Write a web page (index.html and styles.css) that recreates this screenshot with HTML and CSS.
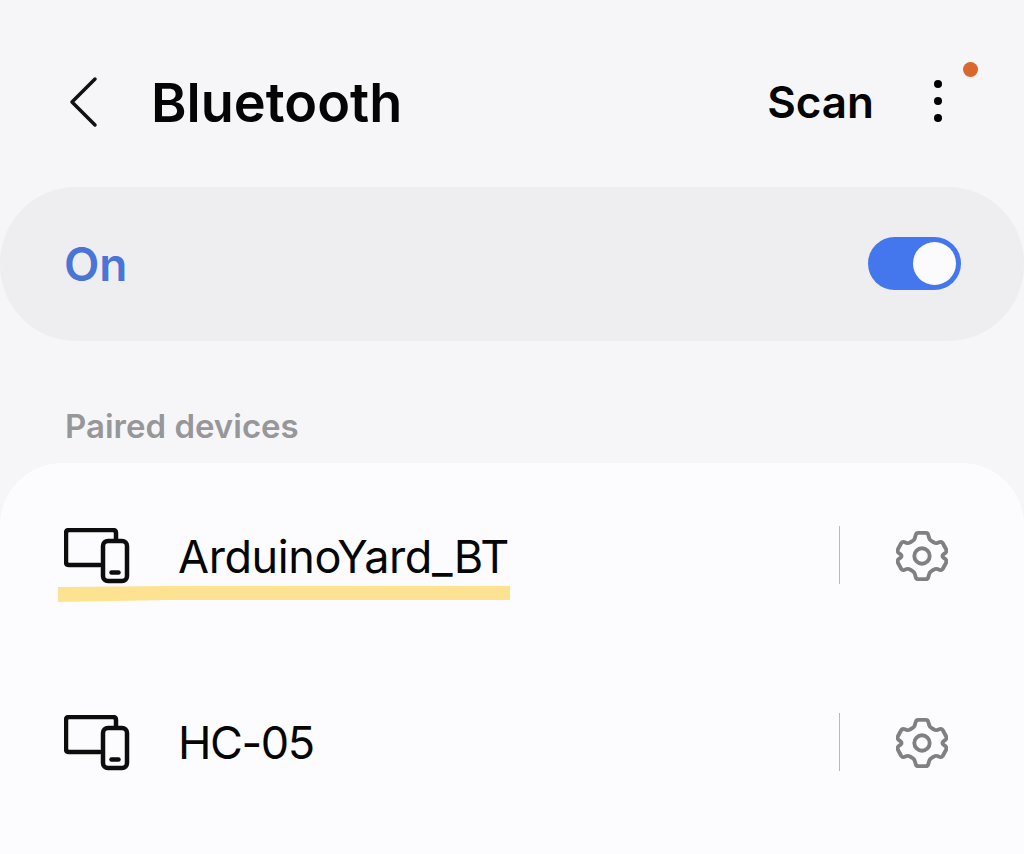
FILE: index.html
```html
<!DOCTYPE html>
<html lang="en">
<head>
<meta charset="UTF-8">
<title>Bluetooth</title>
<link rel="stylesheet" href="styles.css">
</head>
<body>
<div class="screen">
    <header class="topbar">
        <svg class="back" width="32" height="52" viewBox="0 0 32 52">
            <path d="M27 3 L4 26 L27 49"/>
        </svg>
        <h1>Bluetooth</h1>
        <span class="scan">Scan</span>
        <div class="more">
            <i></i><i></i><i></i>
            <b class="dot"></b>
        </div>
    </header>

    <section class="toggle-card">
        <span class="on">On</span>
        <div class="switch"><i></i></div>
    </section>

    <h2>Paired devices</h2>

    <section class="list">
        <div class="device first">
            <svg class="devicon" width="66" height="56" viewBox="0 0 66 56">
                <path class="line" d="M36 37 H5 Q2 37 2 34 V5 Q2 2 5 2 H49 Q52 2 52 5 V12"/>
                <rect class="line" x="39" y="13" width="24" height="40" rx="5"/>
                <path class="line" d="M47.5 44.5 H54.5"/>
            </svg>
            <span class="name">ArduinoYard_BT</span>
            <div class="sep"></div>
            <svg class="gear" width="52" height="52" viewBox="0 0 54 54">
                <path class="gear-line" d="M23 3 H31 Q33 3 33.5 5 L34.5 8.5 Q35 10.5 37 11.5 L39.5 13 Q41 14 43 13.5 L45.5 12.5 Q47.5 12 48.5 13.5 L52 20 Q53 22 51.5 23.5 L49 25.5 Q47.5 27 49 28.5 L51.5 30.5 Q53 32 52 34 L48.5 40.5 Q47.5 42 45.5 41.5 L43 40.5 Q41 40 39.5 41 L37 42.5 Q35 43.5 34.5 45.5 L33.5 49 Q33 51 31 51 H23 Q21 51 20.5 49 L19.5 45.5 Q19 43.5 17 42.5 L14.5 41 Q13 40 11 40.5 L8.5 41.5 Q6.5 42 5.5 40.5 L2 34 Q1 32 2.5 30.5 L5 28.5 Q6.5 27 5 25.5 L2.5 23.5 Q1 22 2 20 L5.5 13.5 Q6.5 12 8.5 12.5 L11 13.5 Q13 14 14.5 13 L17 11.5 Q19 10.5 19.5 8.5 L20.5 5 Q21 3 23 3 Z"/>
                <circle class="gear-line" cx="27" cy="27" r="8"/>
            </svg>
            <svg class="mark" width="452" height="18" viewBox="0 0 452 18">
                <path d="M0 2 L110 1 H452 V15 H110 L0 17 Z"/>
            </svg>
        </div>
        <div class="device">
            <svg class="devicon" width="66" height="56" viewBox="0 0 66 56">
                <path class="line" d="M36 37 H5 Q2 37 2 34 V5 Q2 2 5 2 H49 Q52 2 52 5 V12"/>
                <rect class="line" x="39" y="13" width="24" height="40" rx="5"/>
                <path class="line" d="M47.5 44.5 H54.5"/>
            </svg>
            <span class="name short">HC-05</span>
            <div class="sep"></div>
            <svg class="gear" width="52" height="52" viewBox="0 0 54 54">
                <path class="gear-line" d="M23 3 H31 Q33 3 33.5 5 L34.5 8.5 Q35 10.5 37 11.5 L39.5 13 Q41 14 43 13.5 L45.5 12.5 Q47.5 12 48.5 13.5 L52 20 Q53 22 51.5 23.5 L49 25.5 Q47.5 27 49 28.5 L51.5 30.5 Q53 32 52 34 L48.5 40.5 Q47.5 42 45.5 41.5 L43 40.5 Q41 40 39.5 41 L37 42.5 Q35 43.5 34.5 45.5 L33.5 49 Q33 51 31 51 H23 Q21 51 20.5 49 L19.5 45.5 Q19 43.5 17 42.5 L14.5 41 Q13 40 11 40.5 L8.5 41.5 Q6.5 42 5.5 40.5 L2 34 Q1 32 2.5 30.5 L5 28.5 Q6.5 27 5 25.5 L2.5 23.5 Q1 22 2 20 L5.5 13.5 Q6.5 12 8.5 12.5 L11 13.5 Q13 14 14.5 13 L17 11.5 Q19 10.5 19.5 8.5 L20.5 5 Q21 3 23 3 Z"/>
                <circle class="gear-line" cx="27" cy="27" r="8"/>
            </svg>
        </div>
    </section>
</div>
</body>
</html>
```
FILE: styles.css
```css
html,
body {
    height: 100%;
    margin: 0;
}

body {
    background: #f6f6f9;
    font-family: 'Inter', sans-serif;
    color: #050505;
    overflow: hidden;
}

.screen {
    display: flex;
    flex-direction: column;
    height: 854px;
}

.topbar {
    display: flex;
    align-items: center;
    height: 187px;
    padding: 19px 0 0 68px;
    box-sizing: border-box;
}

.back {
    margin-bottom: 3px;
    fill: none;
    stroke: #111;
    stroke-width: 3.5;
    stroke-linecap: round;
    stroke-linejoin: round;
}

.topbar h1 {
    margin: 0 0 2px 51px;
    font-size: 54px;
    font-weight: 600;
}

.scan {
    margin-left: auto;
    margin-bottom: 2px;
    font-size: 44px;
    font-weight: 600;
}

.more {
    position: relative;
    display: flex;
    flex-direction: column;
    align-items: center;
    gap: 9px;
    width: 16px;
    margin: 0 78px 4px 56px;
}

.more i {
    width: 8px;
    height: 8px;
    border-radius: 50%;
    background: #000;
}

.dot {
    position: absolute;
    top: -18px;
    left: 33px;
    width: 15px;
    height: 15px;
    border-radius: 50%;
    background: #d9672e;
}

.toggle-card {
    display: flex;
    align-items: center;
    justify-content: space-between;
    height: 154px;
    padding: 0 63px 0 64px;
    box-sizing: border-box;
    background: #eeeef1;
    border-radius: 76px;
}

.on {
    font-size: 46px;
    font-weight: 600;
    color: #4a74d6;
}

.switch {
    display: flex;
    align-items: center;
    justify-content: flex-end;
    width: 93px;
    height: 53px;
    margin-bottom: 2px;
    padding-right: 5px;
    box-sizing: border-box;
    background: #4477ee;
    border-radius: 27px;
}

.switch i {
    width: 43px;
    height: 43px;
    border-radius: 50%;
    background: #fbfbfd;
}

h2 {
    margin: 66px 0 17px 65px;
    font-size: 33px;
    line-height: 39px;
    font-weight: 600;
    color: #979799;
}

.list {
    flex: 1;
    background: #fcfcfe;
    border-radius: 62px 62px 0 0;
}

.device {
    position: relative;
    display: flex;
    align-items: center;
    height: 187px;
    padding: 0 76px 2px 64px;
    box-sizing: border-box;
}

.devicon {
    flex: none;
}

.line {
    fill: none;
    stroke: #0d0d0d;
    stroke-width: 4.5;
    stroke-linecap: round;
}

.name {
    margin-left: 48px;
    margin-top: 2px;
    font-size: 45px;
    letter-spacing: -0.4px;
}

.name.short {
    margin-top: 0;
    letter-spacing: -1.4px;
}

.sep {
    width: 1px;
    height: 58px;
    margin-left: auto;
    margin-right: 56px;
    margin-bottom: 2px;
    background: #b9b9bb;
}

.gear {
    flex: none;
}

.gear-line {
    fill: none;
    stroke: #808082;
    stroke-width: 4;
    stroke-linejoin: round;
}

.mark {
    position: absolute;
    left: 58px;
    top: 122px;
    fill: #fde391;
}
```
